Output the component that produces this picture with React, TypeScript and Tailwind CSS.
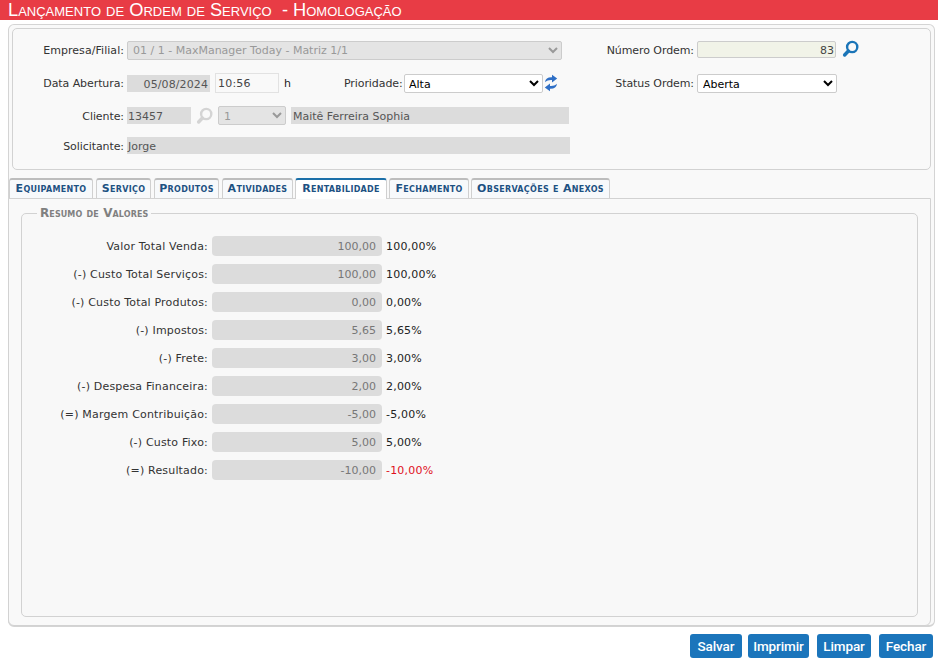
import React from "react";

const Lens = ({ color }: { color: string }) => (
  <svg width="17" height="18" viewBox="0 0 17 18" fill="none">
    <circle cx="10.2" cy="7" r="5.1" stroke={color} strokeWidth="2.4" />
    <path d="M6.4 11 L2.6 15" stroke={color} strokeWidth="3.4" strokeLinecap="round" />
  </svg>
);

const Sync = () => (
  <svg width="14" height="18" viewBox="0 0 14 18" fill="#2f6fc6">
    <path d="M1 8.2C1.4 4.6 4 3 8 3.2V0.8L13.2 4.6 8 8.4V6C5 5.8 3 6.4 1 8.2Z" />
    <path d="M13 9.8C12.6 13.4 10 15 6 14.8V17.2L0.8 13.4 6 9.6V12C9 12.2 11 11.6 13 9.8Z" />
  </svg>
);

const tabs = [
  { t: "Equipamento", w: "w-[84px] mr-[3px]" },
  { t: "Serviço", w: "w-[55px] mr-[3px]" },
  { t: "Produtos", w: "w-[65px] mr-[3px]" },
  { t: "Atividades", w: "w-[71px] mr-[2px]" },
  { t: "Rentabilidade", w: "w-[92px] mr-[2px]", active: true },
  { t: "Fechamento", w: "w-[80px] mr-[2px]" },
  { t: "Observações e Anexos", w: "w-[139px]" },
];

const rows = [
  ["Valor Total Venda:", "100,00", "100,00%"],
  ["(-) Custo Total Serviços:", "100,00", "100,00%"],
  ["(-) Custo Total Produtos:", "0,00", "0,00%"],
  ["(-) Impostos:", "5,65", "5,65%"],
  ["(-) Frete:", "3,00", "3,00%"],
  ["(-) Despesa Financeira:", "2,00", "2,00%"],
  ["(=) Margem Contribuição:", "-5,00", "-5,00%"],
  ["(-) Custo Fixo:", "5,00", "5,00%"],
  ["(=) Resultado:", "-10,00", "-10,00%"],
];

const Label = ({ w, children }: { w: string; children: React.ReactNode }) => (
  <label className={`${w} shrink-0 text-right text-[#333] mr-[3px] tracking-[-0.08px]`}>{children}</label>
);

export default function App() {
  return (
    <div className="w-[938px] h-[664px] overflow-hidden bg-white text-[11px] leading-[14px] text-[#222] font-['DejaVu_Sans',Verdana,sans-serif]">
      <div className="h-5 bg-[#e83c45] pl-2 text-white text-[18.3px] leading-5 font-['Liberation_Sans',Arial,sans-serif] [font-variant:small-caps] whitespace-pre">
        Lançamento de Ordem de Serviço  - Homologação
      </div>

      <div className="ml-2 mt-1 w-[927px] h-[603px] border border-[#d4d4d4] border-b-2 rounded-md bg-[#f9f9f9]">
        <div className="ml-[3px] mt-[3px] h-[142px] w-[919px] border border-[#d2d2d2] rounded-[5px] bg-[#f9f9f9] flex pt-3">
          <div className="w-[557px] shrink-0 flex flex-col">
            <div className="flex items-center h-[19px]">
              <label className="w-[111px] shrink-0 text-right text-[#333] mr-[3px] tracking-[0.05px]">Empresa/Filial:</label>
              <select disabled className="w-[435px] h-[19px] border border-[#ccc] rounded-[2px] bg-[#e4e4e4] text-[#999] pl-[1px] text-[11px]">
                <option>01 / 1 - MaxManager Today - Matriz 1/1</option>
              </select>
            </div>
            <div className="flex items-center h-5 mt-[13px]">
              <div className="pt-[2px]"><Label w="w-[111px] block">Data Abertura:</Label></div>
              <div className="w-[83px] h-[17px] bg-[#dcdcdc] text-right pr-[2px] leading-[19px] text-[#555] tracking-[0.1px]">05/08/2024</div>
              <div className="w-[64px] h-5 ml-[5px] border border-[#e2e2e2] bg-[#f9f9f9] pl-[2px] leading-[20px] text-[#444] tracking-[0.2px]">10:56</div>
              <span className="ml-[5px] w-[60px] pt-[2px]">h</span>
              <label className="w-[57px] text-[#333] mr-[3px] pt-[2px] tracking-[-0.08px]">Prioridade:</label>
              <select className="w-[139px] h-[19px] self-end border border-[#ccc] rounded-[2px] bg-white text-black pl-0 pt-px text-[11px]">
                <option>Alta</option>
              </select>
              <span className="ml-[1px]"><Sync /></span>
            </div>
            <div className="flex items-center h-[19px] mt-[13px]">
              <div className="pt-[2px]"><Label w="w-[111px] block">Cliente:</Label></div>
              <div className="w-[64px] h-[17px] bg-[#dcdcdc] pl-[1px] leading-[19px] text-[#555]">13457</div>
              <span className="ml-[5px] mr-[5px]"><Lens color="#d4d4d4" /></span>
              <select disabled className="w-[68px] h-[19px] border border-[#ccc] rounded-[2px] bg-[#e4e4e4] text-[#999] pl-[1px] pt-px text-[11px]">
                <option>1</option>
              </select>
              <div className="w-[278px] h-[17px] ml-[5px] bg-[#dcdcdc] pl-[2px] leading-[19px] text-[#555]">Maitê Ferreira Sophia</div>
            </div>
            <div className="flex items-center h-[17px] mt-3">
              <div className="pt-[2px]"><Label w="w-[111px] block">Solicitante:</Label></div>
              <div className="w-[443px] h-[17px] bg-[#dcdcdc] pl-[1px] leading-[19px] text-[#555]">Jorge</div>
            </div>
          </div>
          <div className="flex flex-col">
            <div className="flex items-center h-[19px]">
              <Label w="w-[124px]">Número Ordem:</Label>
              <div className="w-[139px] h-[17px] self-start border border-[#ccc] rounded-[2px] bg-[#f1f3e8] text-right pr-[1px] leading-[17px] text-[#444]">83</div>
              <span className="ml-[6px] self-start -mt-[1px]"><Lens color="#1b75b8" /></span>
            </div>
            <div className="flex items-center h-5 mt-[13px]">
              <div className="pt-[2px]"><Label w="w-[124px] block">Status Ordem:</Label></div>
              <select className="w-[140px] h-[19px] self-end border border-[#ccc] rounded-[2px] bg-white text-black pl-[1px] pt-px text-[11px]">
                <option>Aberta</option>
              </select>
            </div>
          </div>
        </div>

        <div className="flex ml-0 mt-2 h-5 relative z-10 font-bold text-[11px] tracking-[0.3px] [font-variant:small-caps] text-[#1d5182]">
          {tabs.map((t) => (
            <div
              key={t.t}
              className={`${t.w} shrink-0 text-center whitespace-nowrap leading-[18px] rounded-t-[3px] border-x border-t-2 ${
                t.active ? "bg-white border-t-[#1b6fa8] border-x-[#d0d0d0] h-[21px]" : "bg-[#f7f9fb] border-t-[#bdbdbd] border-x-[#d0d0d0] h-5"
              }`}
            >
              {t.t}
            </div>
          ))}
        </div>

        <div className="-ml-px w-[923px] h-[428px] border border-[#d2d2d2] rounded-b-md bg-[#f9f9f9] px-3 pt-[7px]">
          <fieldset className="h-[411px] border border-[#d2d2d2] rounded-[5px] bg-[#f8f8f8] pt-4">
            <legend className="ml-[15px] px-[3px] font-bold text-[12px] leading-[14px] tracking-[0.1px] [font-variant:small-caps] text-[#808080]">Resumo de Valores</legend>
            <div className="flex flex-col gap-2">
              {rows.map(([l, v, p], i) => (
                <div key={l} className="flex items-center h-5">
                  <label className="w-[186px] shrink-0 text-right text-[#333] mr-[4px] pt-[2px] tracking-[0.18px]">{l}</label>
                  <div className="w-[170px] h-5 rounded-[4px] bg-[#dcdcdc] text-right pr-[6px] leading-[22px] text-[#777]">{v}</div>
                  <span className={`ml-1 pt-[2px] tracking-[0.2px] ${i === 8 ? "text-[#e0101e]" : "text-[#222]"}`}>{p}</span>
                </div>
              ))}
            </div>
          </fieldset>
        </div>
      </div>

      <div className="flex justify-end mr-[5px] mt-[7px] text-white text-[13.5px] font-medium tracking-[-0.1px] font-['Roboto',Arial,sans-serif]">
        <button className="w-[52px] h-6 rounded-[3px] bg-[#1b75bb]">Salvar</button>
        <button className="w-[61px] h-6 rounded-[3px] bg-[#1b75bb] ml-[6px]">Imprimir</button>
        <button className="w-[54px] h-6 rounded-[3px] bg-[#1b75bb] ml-2">Limpar</button>
        <button className="w-[54px] h-6 rounded-[3px] bg-[#1b75bb] ml-2">Fechar</button>
      </div>
    </div>
  );
}
